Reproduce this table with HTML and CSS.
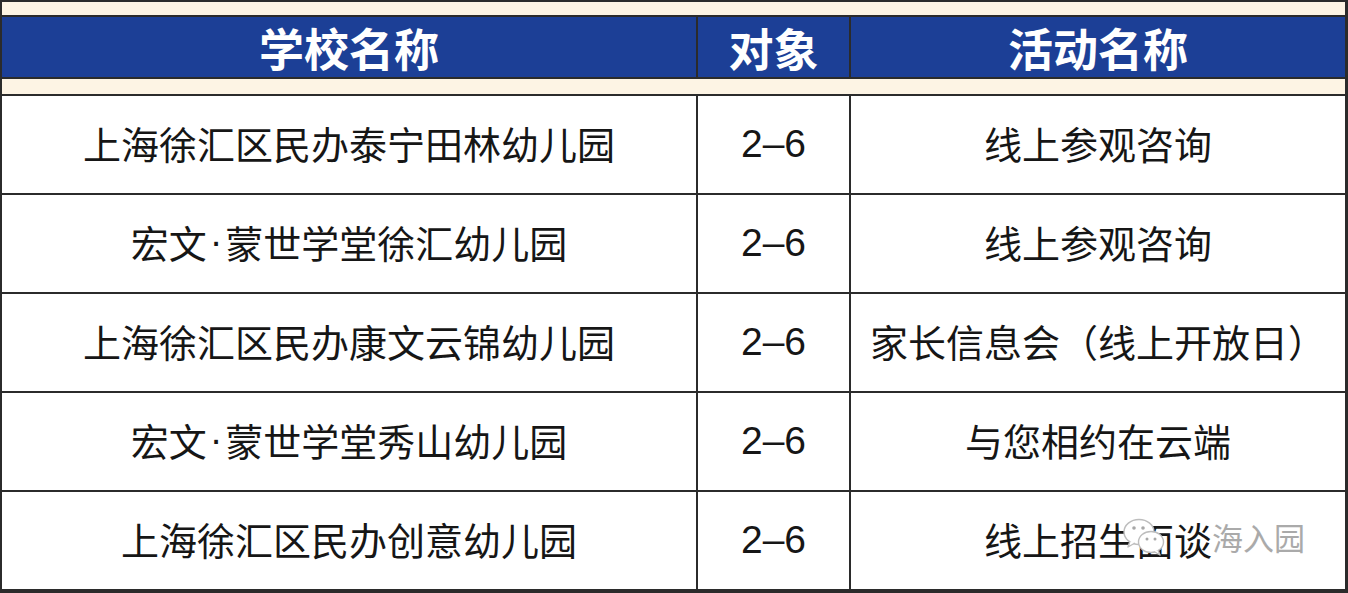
FILE: index.html
```html
<!DOCTYPE html>
<html lang="zh-CN">
<head>
<meta charset="utf-8">
<title>学校活动</title>
<link rel="stylesheet" href="styles.css">
</head>
<body>
<div class="sheet">
  <div class="strip strip-top"></div>
  <div class="head">学校名称</div>
  <div class="head">对象</div>
  <div class="head">活动名称</div>
  <div class="strip strip-mid"></div>

  <div class="cell">上海徐汇区民办泰宁田林幼儿园</div>
  <div class="cell num">2–6</div>
  <div class="cell">线上参观咨询</div>

  <div class="cell">宏文<span class="dot">·</span>蒙世学堂徐汇幼儿园</div>
  <div class="cell num">2–6</div>
  <div class="cell">线上参观咨询</div>

  <div class="cell">上海徐汇区民办康文云锦幼儿园</div>
  <div class="cell num">2–6</div>
  <div class="cell">家长信息会（线上开放日）</div>

  <div class="cell">宏文<span class="dot">·</span>蒙世学堂秀山幼儿园</div>
  <div class="cell num">2–6</div>
  <div class="cell">与您相约在云端</div>

  <div class="cell">上海徐汇区民办创意幼儿园</div>
  <div class="cell num">2–6</div>
  <div class="cell">线上招生面谈</div>

  <div class="watermark">
    <svg class="wm-icon" width="46" height="40" viewBox="0 0 46 40">
      <ellipse cx="17" cy="16" rx="15" ry="12.5" fill="#fff" stroke="#bdbdbd" stroke-width="1.4"/>
      <path d="M8 25 L6 31 L13 27" fill="#fff" stroke="#bdbdbd" stroke-width="1.4" stroke-linejoin="round"/>
      <circle cx="12" cy="12" r="1.8" fill="#a8a8a8"/>
      <circle cx="21" cy="12" r="1.8" fill="#a8a8a8"/>
      <ellipse cx="29" cy="26" rx="12.5" ry="10.5" fill="#fff" stroke="#bdbdbd" stroke-width="1.4"/>
      <path d="M36 34 L38 39 L32 35.5" fill="#fff" stroke="#bdbdbd" stroke-width="1.4" stroke-linejoin="round"/>
      <circle cx="25" cy="23" r="1.5" fill="#a8a8a8"/>
      <circle cx="33" cy="23" r="1.5" fill="#a8a8a8"/>
    </svg>
    <span class="wm-text">海入园</span>
  </div>
</div>
</body>
</html>
```
FILE: styles.css
```css
html, body {
  margin: 0;
  padding: 0;
  background: #ffffff;
}

.sheet {
  position: relative;
  box-sizing: border-box;
  width: 1348px;
  height: 593px;
  display: grid;
  grid-template-columns: 694px 151px 494px;
  grid-template-rows: 13px 60px 15px repeat(5, 97px);
  gap: 2px;
  background: #2b2b2b;
  border-top: 2px solid #2b2b2b;
  border-left: 2px solid #2b2b2b;
  border-right: 3px solid #2b2b2b;
  border-bottom: 4px solid #2b2b2b;
  font-family: "Noto Sans CJK SC", "Noto Sans", sans-serif;
}

.strip {
  grid-column: 1 / -1;
  background: #fdf4e4;
}

.head {
  background: #1c3f96;
  color: #ffffff;
  font-weight: 700;
  font-size: 45px;
  display: flex;
  align-items: center;
  justify-content: center;
  line-height: 1;
  padding-top: 1px;
}

.cell {
  background: #ffffff;
  color: #161616;
  font-size: 38px;
  display: flex;
  align-items: center;
  justify-content: center;
  line-height: 1;
  white-space: nowrap;
  padding-bottom: 3px;
}

.dot {
  font-family: "Liberation Sans", sans-serif;
  margin: 0 3px;
}

.num {
  font-family: "Liberation Sans", "Noto Sans", sans-serif;
  font-size: 39px;
}

.watermark {
  position: absolute;
  left: 1120px;
  top: 514px;
  display: flex;
  align-items: center;
}

.wm-text {
  margin-left: 44px;
  font-size: 31px;
  color: #9c9c9c;
  opacity: 0.85;
  line-height: 1;
}
```
